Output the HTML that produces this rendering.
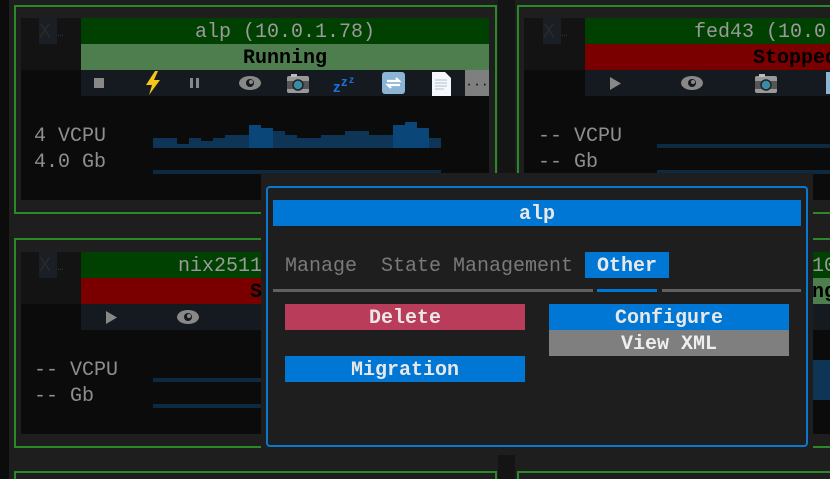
<!DOCTYPE html>
<html><head><meta charset="utf-8"><style>
*{margin:0;padding:0;box-sizing:border-box}
html{width:830px;height:479px;overflow:hidden}
body{width:830px;height:479px;overflow:hidden;background:#1e1e1e;position:relative;font-family:"Liberation Mono","DejaVu Sans Mono",monospace;font-size:20px;}
.a{position:absolute}
.t{position:absolute;height:26px;line-height:29px;white-space:pre;overflow:hidden}
.c{text-align:center}
.bar{position:absolute;background:#0e3556}
.x{position:absolute;width:18px;height:26px;line-height:29px;background:#1a1f25;color:#2a2a2a;font-size:20px}
.d{position:absolute;height:26px;line-height:32px;color:#3a3a3a;font-size:11px}
</style></head><body>
<div class="a" style="left:0;top:0;width:9px;height:479px;background:#0c0c0c"></div>
<div class="a" style="left:498px;top:0;width:17px;height:479px;background:#141414"></div>

<!-- card 1 -->
<div class="a" style="left:14px;top:5px;width:483px;height:209px;border:2px solid #2a8a2a"></div>
<div class="a" style="left:21px;top:18px;width:468px;height:182px;background:#0b0b0b"></div>
<div class="a" style="left:21px;top:18px;width:60px;height:52px;background:#131313"></div>
<div class="x" style="left:39px;top:18px">X</div><div class="d" style="left:57px;top:18px">…</div>
<div class="t c" style="left:81px;top:18px;width:408px;background:#004000;color:#9a9a9a">alp (10.0.1.78)</div>
<div class="t c" style="left:81px;top:44px;width:408px;background:#4e7d4e;color:#000;font-weight:bold">Running</div>
<div class="t" style="left:81px;top:70px;width:408px;background:#141a1f"></div>
<div class="a" style="left:94px;top:78px;width:10px;height:10px;background:#888"></div>
<svg class="a" style="left:144px;top:71px" width="18" height="24"><path d="M11 0L2 14h6l-3 10 11-15h-6l4-9z" fill="#f5c518"/></svg>
<div class="a" style="left:190px;top:78px;width:3px;height:10px;background:#888"></div>
<div class="a" style="left:196px;top:78px;width:3px;height:10px;background:#888"></div>
<svg class="a" style="left:238px;top:74px" width="24" height="18"><ellipse cx="12" cy="9" rx="11" ry="7" fill="#888"/><circle cx="12" cy="9" r="4" fill="#141a1f"/><circle cx="13" cy="8" r="2" fill="#888"/></svg>
<svg class="a" style="left:286px;top:72px" width="24" height="22"><rect x="1" y="4" width="22" height="17" rx="2" fill="#999"/><rect x="1" y="9" width="22" height="8" fill="#555"/><circle cx="12" cy="13" r="5" fill="#3a8aa8" stroke="#222" stroke-width="1.5"/><rect x="5" y="2" width="6" height="3" fill="#bbb"/></svg>
<svg class="a" style="left:333px;top:72px" width="26" height="22"><text x="0" y="20" fill="#1e6fd9" font-weight="bold" font-size="15" font-family="Liberation Sans">z</text><text x="8" y="14" fill="#1e6fd9" font-weight="bold" font-size="13" font-family="Liberation Sans">z</text><text x="16" y="11" fill="#1e6fd9" font-weight="bold" font-size="10" font-family="Liberation Sans">z</text></svg>
<svg class="a" style="left:382px;top:72px" width="23" height="22"><rect x="0" y="0" width="23" height="22" rx="3" fill="#8cb4d4"/><path d="M5 9h12l-3-3M18 13H6l3 3" stroke="#fff" stroke-width="2.2" fill="none"/></svg>
<svg class="a" style="left:432px;top:72px" width="19" height="24"><path d="M0 0h13l6 6v18H0z" fill="#f4f8fc"/><path d="M3 8h12M3 11h12M3 14h12M3 17h9" stroke="#b0c0d0"/></svg>
<div class="t c" style="left:465px;top:70px;width:24px;background:#7f7f7f;color:#111;font-size:13px">···</div>
<div class="t" style="left:34px;top:122px;color:#8e8e8e">4 VCPU</div>
<div class="t" style="left:34px;top:148px;color:#8e8e8e">4.0 Gb</div>
<div id="spark"></div>
<div class="a" style="left:153px;top:170px;width:288px;height:4px;background:#0e2a40"></div>

<!-- card 2 -->
<div class="a" style="left:517px;top:5px;width:330px;height:209px;border:2px solid #2a8a2a"></div>
<div class="a" style="left:524px;top:18px;width:320px;height:182px;background:#0b0b0b"></div>
<div class="a" style="left:524px;top:18px;width:61px;height:52px;background:#131313"></div>
<div class="x" style="left:543px;top:18px">X</div><div class="d" style="left:561px;top:18px">…</div>
<div class="t" style="left:585px;top:18px;width:260px;background:#004000;color:#9a9a9a;padding-left:109px">fed43 (10.0.1.</div>
<div class="t" style="left:585px;top:44px;width:260px;background:#7a0000;color:#000;font-weight:bold;padding-left:168px">Stopped</div>
<div class="t" style="left:585px;top:70px;width:260px;background:#141a1f"></div>
<svg class="a" style="left:610px;top:77px" width="12" height="13"><path d="M0 0L11 6.5L0 13z" fill="#888"/></svg>
<svg class="a" style="left:680px;top:74px" width="24" height="18"><ellipse cx="12" cy="9" rx="11" ry="7" fill="#888"/><circle cx="12" cy="9" r="4" fill="#141a1f"/><circle cx="13" cy="8" r="2" fill="#888"/></svg>
<svg class="a" style="left:754px;top:72px" width="24" height="22"><rect x="1" y="4" width="22" height="17" rx="2" fill="#999"/><rect x="1" y="9" width="22" height="8" fill="#555"/><circle cx="12" cy="13" r="5" fill="#3a8aa8" stroke="#222" stroke-width="1.5"/><rect x="5" y="2" width="6" height="3" fill="#bbb"/></svg>
<div class="a" style="left:826px;top:72px;width:6px;height:22px;background:#8cb4d4"></div>
<div class="t" style="left:538px;top:122px;color:#8e8e8e">-- VCPU</div>
<div class="t" style="left:538px;top:148px;color:#8e8e8e">-- Gb</div>
<div class="a" style="left:657px;top:144px;width:180px;height:4px;background:#0e2a40"></div>
<div class="a" style="left:657px;top:170px;width:180px;height:4px;background:#0e2a40"></div>

<!-- card 3 -->
<div class="a" style="left:14px;top:238px;width:483px;height:210px;border:2px solid #2a8a2a"></div>
<div class="a" style="left:21px;top:252px;width:468px;height:182px;background:#0b0b0b"></div>
<div class="a" style="left:21px;top:252px;width:60px;height:52px;background:#131313"></div>
<div class="x" style="left:39px;top:252px">X</div><div class="d" style="left:57px;top:252px">…</div>
<div class="t" style="left:81px;top:252px;width:408px;background:#004000;color:#9a9a9a;padding-left:97px">nix2511</div>
<div class="t" style="left:81px;top:278px;width:408px;background:#7a0000;color:#000;font-weight:bold;padding-left:169px">S</div>
<div class="t" style="left:81px;top:304px;width:408px;background:#141a1f"></div>
<svg class="a" style="left:106px;top:311px" width="12" height="13"><path d="M0 0L11 6.5L0 13z" fill="#888"/></svg>
<svg class="a" style="left:176px;top:308px" width="24" height="18"><ellipse cx="12" cy="9" rx="11" ry="7" fill="#888"/><circle cx="12" cy="9" r="4" fill="#141a1f"/><circle cx="13" cy="8" r="2" fill="#888"/></svg>
<div class="t" style="left:34px;top:356px;color:#8e8e8e">-- VCPU</div>
<div class="t" style="left:34px;top:382px;color:#8e8e8e">-- Gb</div>
<div class="a" style="left:153px;top:378px;width:300px;height:4px;background:#0e2a40"></div>
<div class="a" style="left:153px;top:404px;width:300px;height:4px;background:#0e2a40"></div>

<!-- card 4 right partial -->
<div class="a" style="left:517px;top:238px;width:330px;height:210px;border:2px solid #2a8a2a"></div>
<div class="a" style="left:524px;top:252px;width:320px;height:182px;background:#0b0b0b"></div>
<div class="t" style="left:812px;top:252px;width:30px;background:#004000;color:#9a9a9a">10</div>
<div class="t" style="left:812px;top:278px;width:30px;background:#4e7d4e;color:#000;font-weight:bold">ng</div>
<div class="t" style="left:812px;top:304px;width:30px;background:#141a1f"></div>
<div class="a" style="left:812px;top:360px;width:18px;height:40px;background:#0e3556"></div>

<!-- bottom cards -->
<div class="a" style="left:14px;top:471px;width:483px;height:8px;border:2px solid #2a8a2a;border-bottom:none"></div>
<div class="a" style="left:517px;top:471px;width:313px;height:8px;border:2px solid #2a8a2a;border-bottom:none;border-right:none"></div>

<!-- dialog -->
<div class="a" style="left:261px;top:173px;width:552px;height:282px;background:#1e1e1e"></div>
<div class="a" style="left:266px;top:186px;width:542px;height:261px;border:2px solid #0b78d0;border-radius:4px"></div>
<div class="t c" style="left:273px;top:200px;width:528px;background:#0077d4;color:#e8e8e8;font-weight:bold">alp</div>
<div class="t" style="left:285px;top:252px;color:#7a7a7a">Manage  State Management</div>
<div class="t c" style="left:585px;top:252px;width:84px;background:#0077d4;color:#e8e8e8;font-weight:bold">Other</div>
<div class="a" style="left:273px;top:289px;width:320px;height:3px;background:#606060"></div>
<div class="a" style="left:597px;top:289px;width:60px;height:3px;background:#0077d4"></div>
<div class="a" style="left:662px;top:289px;width:139px;height:3px;background:#606060"></div>
<div class="t c" style="left:285px;top:304px;width:240px;background:#b93d5a;color:#e8e8e8;font-weight:bold">Delete</div>
<div class="t c" style="left:549px;top:304px;width:240px;background:#0077d4;color:#e8e8e8;font-weight:bold">Configure</div>
<div class="t c" style="left:549px;top:330px;width:240px;background:#7f7f7f;color:#eee;font-weight:bold">View XML</div>
<div class="t c" style="left:285px;top:356px;width:240px;background:#0077d4;color:#e8e8e8;font-weight:bold">Migration</div>

<script>
var t=[138,138,144,138,141,138,135,135,125,128,131,135,138,138,135,135,131,131,135,135,125,122,128,138];
var h='';for(var i=0;i<24;i++){var c=t[i]<=128?'#0a4677':'#0e3556';h+='<div class="bar" style="left:'+(153+i*12)+'px;top:'+t[i]+'px;width:12px;height:'+(148-t[i])+'px;background:'+c+'"></div>';}
document.getElementById('spark').innerHTML=h;
</script>
</body></html>
